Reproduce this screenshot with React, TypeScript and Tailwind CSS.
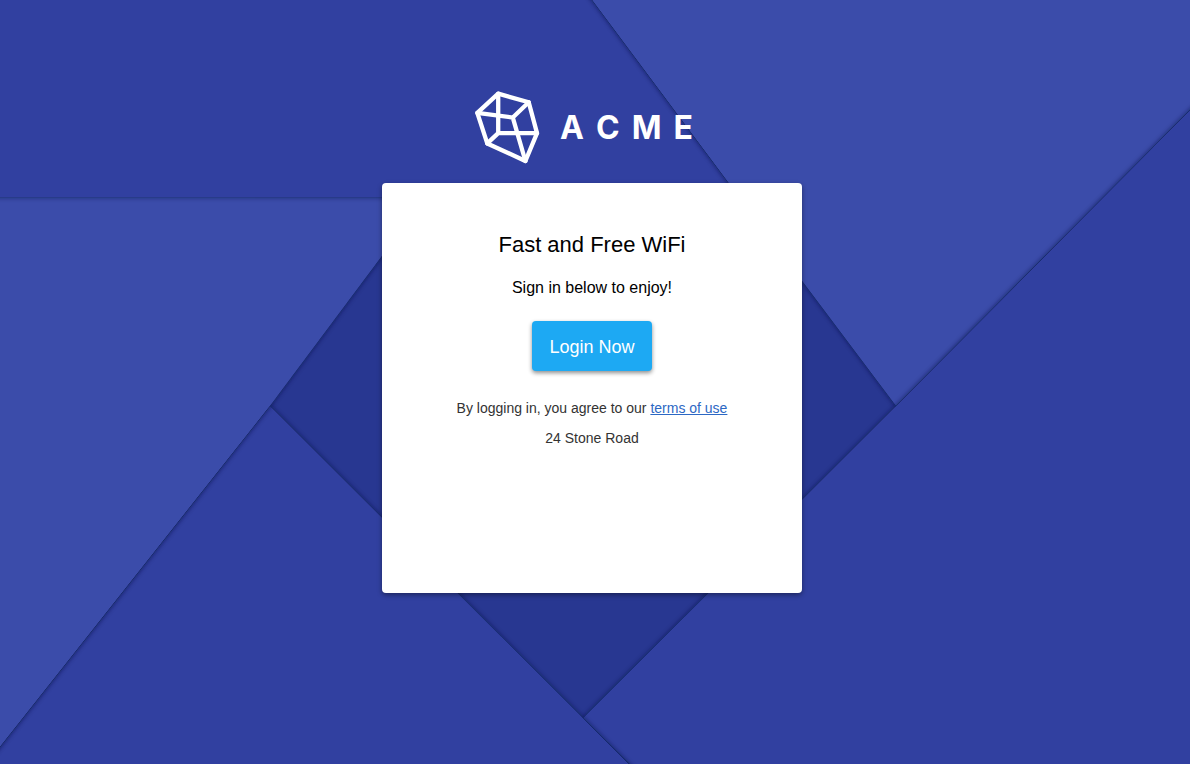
type Sheet = { id: string; fill: string; points: string; shadow: string };

const upperLeft = "-40,-40 562,-40 592,0 739,197 -40,197";
const left = "-40,197 425,197 382,256 270,406 0,747 -40,797";
const lowerLeft = "-40,797 0,747 270,406 583,718 629,764 670,804 -40,804";
const lowerRight = "583,718 896,406 1190,110 1240,60 1240,804 670,804";
const upperRight = "562,-40 1240,-40 1240,60 1190,110 896,406 739,197 592,0";

// Each sheet overlaps the next one round the centre, so every sheet is clipped
// and shaded by the neighbour lying above it.
const sheets: Sheet[] = [
  { id: "upper-left", fill: "#3140a0", points: upperLeft, shadow: upperRight },
  { id: "left", fill: "#3b4caa", points: left, shadow: upperLeft },
  { id: "lower-left", fill: "#3140a0", points: lowerLeft, shadow: left },
  { id: "lower-right", fill: "#3140a0", points: lowerRight, shadow: lowerLeft },
  { id: "upper-right", fill: "#3b4caa", points: upperRight, shadow: lowerRight },
];

function Backdrop() {
  return (
    <svg
      className="absolute inset-0 -z-10 h-full w-full"
      viewBox="0 0 1190 764"
      preserveAspectRatio="xMidYMid slice"
      aria-hidden="true"
    >
      <defs>
        <filter id="soft" x="-10%" y="-10%" width="120%" height="120%">
          <feGaussianBlur stdDeviation="2.4" />
        </filter>
        {sheets.map((s) => (
          <clipPath key={s.id} id={s.id}>
            <polygon points={s.points} />
          </clipPath>
        ))}
      </defs>
      <rect width="1190" height="764" fill="#283791" />
      {sheets.map((s) => (
        <polygon key={s.id} points={s.points} fill="#0d1440" opacity="0.75" filter="url(#soft)" />
      ))}
      {sheets.map((s) => (
        <g key={s.id} clipPath={`url(#${s.id})`}>
          <polygon points={s.points} fill={s.fill} />
          <polygon points={s.shadow} fill="#0d1440" opacity="0.75" filter="url(#soft)" />
        </g>
      ))}
    </svg>
  );
}

function Logo() {
  return (
    <div className="flex items-center gap-5 pr-4 text-white" role="img" aria-label="ACME">
      <svg
        className="h-[73px] w-[65px]"
        viewBox="25 33 196 220"
        fill="none"
        stroke="currentColor"
        strokeWidth="13"
        strokeLinejoin="round"
        strokeLinecap="round"
      >
        <path d="M95 41 187 67 212 160 177 244 62 191 32 99Z" />
        <path d="M32 99 139 113 187 67M139 113 177 244" />
        <path d="M95 41V160L62 191M95 160H212" />
      </svg>
      <div className="flex gap-3 font-['Inter',sans-serif] text-[32px] leading-10 font-bold">
        <span>A</span>
        <span>C</span>
        <span>M</span>
        <span>E</span>
      </div>
    </div>
  );
}

export default function App() {
  return (
    <main className="relative isolate flex min-h-screen flex-col items-center overflow-hidden pt-[91px] pr-[6px] pb-10 font-['Liberation_Sans',Arial,sans-serif]">
      <Backdrop />
      <Logo />
      <section className="mt-[19px] flex min-h-[410px] w-full max-w-[420px] flex-col items-center rounded bg-white px-6 pt-[47px] pb-8 text-center text-black shadow-[0_2px_5px_rgba(0,0,0,0.4)]">
        <h1 className="text-[22px] leading-[30px]">Fast and Free WiFi</h1>
        <p className="mt-4 text-base leading-6">Sign in below to enjoy!</p>
        <button
          type="button"
          className="mt-[21px] min-w-[120px] cursor-pointer rounded bg-[#1da9f3] px-4 pt-3 pb-[10px] text-lg leading-7 text-white shadow-[0_2px_4px_rgba(0,0,0,0.45)] hover:bg-[#1598df]"
        >
          Login Now
        </button>
        <p className="mt-[22px] text-sm leading-[30px] text-[#333333]">
          By logging in, you agree to our{" "}
          <a href="#terms" className="text-[#2c68c4] underline">
            terms of use
          </a>
        </p>
        <p className="text-sm leading-[30px] text-[#333333]">24 Stone Road</p>
      </section>
    </main>
  );
}
